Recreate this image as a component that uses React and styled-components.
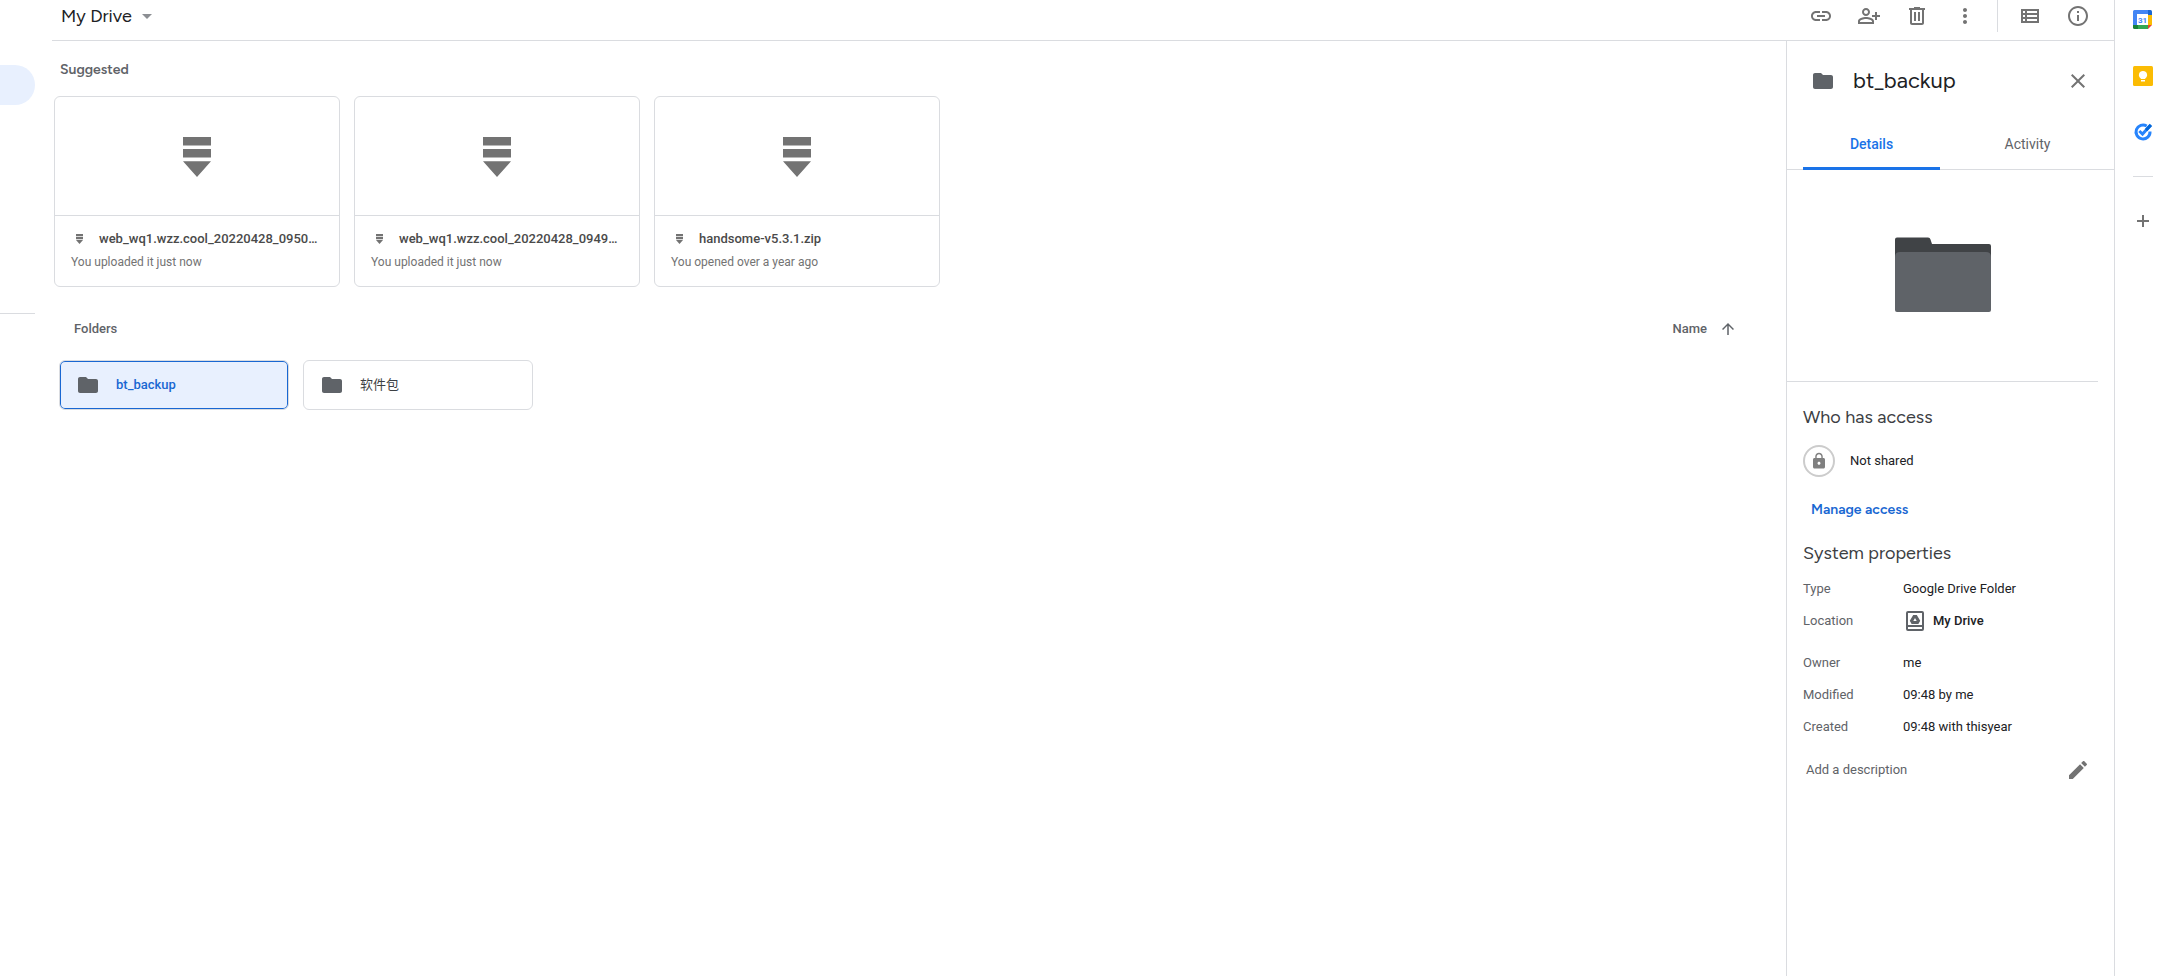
import React, { useState } from 'react'
import styled, { createGlobalStyle, css } from 'styled-components'

const GlobalStyle = createGlobalStyle`
  * {
    box-sizing: border-box;
  }
  body {
    margin: 0;
    background: #fff;
    color: #202124;
    font-family: Roboto, 'Noto Sans CJK SC', sans-serif;
    font-size: 13px;
    line-height: 20px;
  }
  button {
    padding: 0;
    border: 0;
    background: none;
    color: inherit;
    font: inherit;
    cursor: pointer;
  }
  h1, h2, h3, p, dl, dd {
    margin: 0;
  }
  svg {
    display: block;
    flex: none;
  }
`

const display = css`
  font-family: Figtree, Outfit, Lato, sans-serif;
`

const Page = styled.div`
  display: flex;
  min-height: 100vh;
`

const Sidebar = styled.nav`
  width: 52px;
  padding: 65px 17px 0 0;
  flex: none;
`

const ActiveItem = styled.div`
  height: 40px;
  border-radius: 0 20px 20px 0;
  background: #e8f0fe;
`

const SidebarLine = styled.hr`
  height: 1px;
  margin: 208px 0 0;
  border: 0;
  background: #dadce0;
`

const Workspace = styled.div`
  flex: 1;
  min-width: 0;
  display: flex;
  flex-direction: column;
`

const Toolbar = styled.header`
  height: 41px;
  padding: 0 24px 8px 9px;
  display: flex;
  align-items: center;
  justify-content: space-between;
  border-bottom: 1px solid #dadce0;
`

const Crumb = styled.button`
  ${display}
  display: flex;
  align-items: center;
  gap: 10px;
  font-size: 18px;
  line-height: 24px;
`

const Actions = styled.div`
  display: flex;
  align-items: center;
  gap: 24px;
`

const IconButton = styled.button`
  display: flex;
  align-items: center;
  justify-content: center;
  width: 24px;
  height: 24px;
  color: #737373;
`

const Separator = styled.span`
  width: 1px;
  height: 32px;
  margin: 0 -4px;
  background: #dadce0;
`

const Body = styled.div`
  flex: 1;
  display: flex;
`

const Files = styled.main`
  flex: 1;
  min-width: 0;
  padding: 19px 49px 0 2px;
`

const SuggestedTitle = styled.h2`
  ${display}
  padding-left: 6px;
  color: #5f6368;
  font-size: 14px;
  font-weight: 600;
  line-height: 20px;
`

const Cards = styled.div`
  display: flex;
  gap: 14px;
  margin-top: 16px;
`

const Card = styled.article`
  width: 286px;
  height: 191px;
  border: 1px solid #dadce0;
  border-radius: 6px;
`

const Preview = styled.div`
  height: 119px;
  padding-top: 2px;
  display: flex;
  align-items: center;
  justify-content: center;
  border-bottom: 1px solid #dadce0;
  color: #737373;
`

const CardInfo = styled.div`
  padding: 13px 20px 0 16px;
  color: #737373;
  font-size: 12px;
`

const FileName = styled.h3`
  display: flex;
  align-items: center;
  gap: 16px;
  padding-left: 5px;
  margin-bottom: 3px;
  font-size: 13px;
  font-weight: 500;
  line-height: 20px;
  white-space: nowrap;
  span {
    color: #4a4a4a;
  }
`

const FoldersHead = styled.div`
  display: flex;
  justify-content: space-between;
  align-items: center;
  margin-top: 32px;
  padding-left: 20px;
  color: #5f6368;
  h2 {
    font-size: 13px;
    font-weight: 500;
  }
`

const SortButton = styled.button`
  display: flex;
  align-items: center;
  gap: 12px;
  font-weight: 500;
`

const FolderList = styled.div`
  display: flex;
  gap: 14px;
  margin-top: 21px;
  padding-left: 5px;
`

const FolderTile = styled.button`
  display: flex;
  align-items: center;
  gap: 16px;
  width: 230px;
  height: 50px;
  padding-left: 16px;
  border: 1px solid #dadce0;
  border-radius: 6px;
  background: #fff;
  color: #3c4043;
  ${p => p.$selected && css`
    background: #e8f0fe;
    box-shadow: inset 0 0 0 1px #1967d2;
    color: #1967d2;
    font-weight: 500;
  `}
  svg {
    color: #5f6368;
  }
`

const Panel = styled.aside`
  width: 328px;
  flex: none;
  border-left: 1px solid #dadce0;
`

const PanelHead = styled.div`
  display: flex;
  align-items: center;
  height: 80px;
  padding: 0 24px;
  color: #5f6368;
  h1 {
    ${display}
    flex: 1;
    margin-left: 18px;
    color: #202124;
    font-size: 22px;
    font-weight: 400;
    line-height: 28px;
  }
`

const Tabs = styled.div`
  display: flex;
  gap: 19px;
  height: 49px;
  padding: 0 18px 0 16px;
  border-bottom: 1px solid #dadce0;
`

const Tab = styled.button`
  flex: 1;
  height: 49px;
  padding-bottom: 1px;
  border-bottom: 3px solid ${p => p.$active ? '#1a73e8' : 'transparent'};
  color: ${p => p.$active ? '#1a73e8' : '#5f6368'};
  font-size: 14px;
  font-weight: ${p => p.$active ? 500 : 400};
`

const Hero = styled.div`
  display: flex;
  justify-content: center;
  height: 212px;
  margin-right: 16px;
  padding-top: 67px;
  border-bottom: 1px solid #dadce0;
`

const Section = styled.section`
  padding: 23px 24px 0 16px;
`

const SectionTitle = styled.h2`
  ${display}
  color: #3c4043;
  font-size: 18px;
  font-weight: 400;
  line-height: 24px;
`

const Access = styled.div`
  display: flex;
  align-items: center;
  gap: 15px;
  margin-top: 16px;
`

const LockBadge = styled.span`
  display: flex;
  align-items: center;
  justify-content: center;
  width: 32px;
  height: 32px;
  border: 2px solid #ccc;
  border-radius: 50%;
  color: #808080;
`

const ManageButton = styled.button`
  ${display}
  display: block;
  margin: 25px 0 0 8px;
  color: #1967d2;
  font-size: 14px;
  font-weight: 600;
  line-height: 16px;
`

const Properties = styled.dl`
  display: grid;
  grid-template-columns: 100px 1fr;
  row-gap: 12px;
  margin-top: 14px;
  dt {
    color: #5f6368;
  }
`

const Location = styled.dd`
  && {
    margin-bottom: 10px;
  }
  display: flex;
  align-items: center;
  gap: 6px;
  height: 20px;
  font-weight: 500;
`

const Description = styled.div`
  display: flex;
  align-items: center;
  justify-content: space-between;
  height: 24px;
  margin-top: 21px;
  padding-left: 3px;
  color: #5f6368;
`

const Rail = styled.aside`
  width: 43px;
  flex: none;
  display: flex;
  flex-direction: column;
  padding: 8px 0 0 16px;
  gap: 32px;
  border-left: 1px solid #dadce0;
`

const RailLine = styled.hr`
  width: 20px;
  height: 1px;
  margin: 0 0 0 2px;
  border: 0;
  background: #dadce0;
`

const Icon = ({ d, size = 24 }) => (
  <svg width={size} height={size} viewBox="0 0 24 24" fill="currentColor" aria-hidden="true">
    <path d={d} />
  </svg>
)

const paths = {
  folder: 'M10 4H4c-1.1 0-2 .9-2 2v12c0 1.1.9 2 2 2h16c1.1 0 2-.9 2-2V8c0-1.1-.9-2-2-2h-8l-2-2z',
  link: 'M3.9 12c0-1.71 1.39-3.1 3.1-3.1h4V7H7c-2.76 0-5 2.24-5 5s2.24 5 5 5h4v-1.9H7c-1.71 0-3.1-1.39-3.1-3.1zM8 13h8v-2H8v2zm9-6h-4v1.9h4c1.71 0 3.1 1.39 3.1 3.1s-1.39 3.1-3.1 3.1h-4V17h4c2.76 0 5-2.24 5-5s-2.24-5-5-5z',
  share: 'M9 12c2.21 0 4-1.79 4-4s-1.79-4-4-4-4 1.79-4 4 1.79 4 4 4zm0-6c1.1 0 2 .9 2 2s-.9 2-2 2-2-.9-2-2 .9-2 2-2zm0 7c-2.67 0-8 1.34-8 4v3h16v-3c0-2.66-5.33-4-8-4zm6 5H3v-.99C3.2 16.29 6.3 15 9 15s5.8 1.29 6 2v1zm5-7V8h-2v3h-3v2h3v3h2v-3h3v-2h-3z',
  trash: 'M15 4V3H9v1H4v2h1v13c0 1.1.9 2 2 2h10c1.1 0 2-.9 2-2V6h1V4h-5zm2 15H7V6h10v13zM9 8h2v9H9zm4 0h2v9h-2z',
  more: 'M12 8c1.1 0 2-.9 2-2s-.9-2-2-2-2 .9-2 2 .9 2 2 2zm0 2c-1.1 0-2 .9-2 2s.9 2 2 2 2-.9 2-2-.9-2-2-2zm0 6c-1.1 0-2 .9-2 2s.9 2 2 2 2-.9 2-2-.9-2-2-2z',
  list: 'M3 5v14h18V5H3zm4 2v2H5V7h2zm-2 6v-2h2v2H5zm0 2h2v2H5v-2zm14 2H9v-2h10v2zm0-4H9v-2h10v2zm0-4H9V7h10v2z',
  info: 'M11 7h2v2h-2zm0 4h2v6h-2zm1-9C6.48 2 2 6.48 2 12s4.48 10 10 10 10-4.48 10-10S17.52 2 12 2zm0 18c-4.41 0-8-3.59-8-8s3.59-8 8-8 8 3.59 8 8-3.59 8-8 8z',
  close: 'M19 6.41L17.59 5 12 10.59 6.41 5 5 6.41 10.59 12 5 17.59 6.41 19 12 13.41 17.59 19 19 17.59 13.41 12z',
  up: 'M4 12l1.41 1.41L11 7.83V20h2V7.83l5.58 5.59L20 12l-8-8-8 8z',
  lock: 'M18 8h-1V6c0-2.76-2.24-5-5-5S7 3.24 7 6v2H6c-1.1 0-2 .9-2 2v10c0 1.1.9 2 2 2h12c1.1 0 2-.9 2-2V10c0-1.1-.9-2-2-2zm-6 9c-1.1 0-2-.9-2-2s.9-2 2-2 2 .9 2 2-.9 2-2 2zm3.1-9H8.9V6c0-1.71 1.39-3.1 3.1-3.1s3.1 1.39 3.1 3.1v2z',
  edit: 'M3 17.25V21h3.75L17.81 9.94l-3.75-3.75L3 17.25zM20.71 7.04c.39-.39.39-1.02 0-1.41l-2.34-2.34c-.39-.39-1.02-.39-1.41 0l-1.83 1.83 3.75 3.75 1.83-1.83z',
  add: 'M18 13h-5v5h-2v-5H6v-2h5V6h2v5h5v2z',
}

const ArchiveIcon = ({ width, height }) => (
  <svg width={width} height={height} viewBox="0 0 28 40" fill="currentColor" aria-hidden="true">
    <path d="M0 0h28v8.500H0zM0 12h28v8.500H0zM0 24.300h28L14 40z" />
  </svg>
)

const BigFolder = () => (
  <svg width="96" height="75" viewBox="0 0 96 75" aria-hidden="true">
    <path d="M2 .5h31q2 0 2.500 2L37 7h57q2 0 2 2v30H0V2.500q0-2 2-2z" fill="#404346" />
    <path d="M5 15h86q5 0 5 5v53q0 2-2 2H2q-2 0-2-2V20q0-5 5-5z" fill="#5f6368" />
  </svg>
)

const DriveIcon = () => (
  <svg width="24" height="24" viewBox="0 0 24 24" aria-hidden="true">
    <path d="M5 2h14q2 0 2 2v16q0 2-2 2H5q-2 0-2-2V4q0-2 2-2zm0 2v12h14V4zm0 14v2h14v-2z" fill="#5f6368" fillRule="evenodd" />
    <path d="M10.200 6h3.600l3.400 5.800L15.400 15H8.600l-1.800-3.200zM12 9l-1.700 3h3.400z" fill="#5f6368" fillRule="evenodd" />
  </svg>
)

const CalendarIcon = () => (
  <svg width="20" height="20" viewBox="0 0 20 20" aria-hidden="true">
    <path d="M1.500 0H15v5H5v10H0V1.500Q0 0 1.500 0z" fill="#4285f4" />
    <path d="M15 0h2.500Q19 0 19 1.500V5h-4z" fill="#1967d2" />
    <path d="M15 5h4v10h-4z" fill="#fbbc04" />
    <path d="M5 15h10v4H5z" fill="#34a853" />
    <path d="M0 15h5v4H1.500Q0 19 0 17.500z" fill="#188038" />
    <path d="M15 15h4l-4 4z" fill="#ea4335" />
    <path d="M4 4h11v11H4z" fill="#fff" />
    <text x="9.500" y="13" textAnchor="middle" fontFamily="Roboto, sans-serif" fontSize="8" fontWeight="700" fill="#4285f4">31</text>
  </svg>
)

const KeepIcon = () => (
  <svg width="20" height="20" viewBox="0 0 20 20" aria-hidden="true">
    <rect width="20" height="20" rx="1.500" fill="#fbbc04" />
    <path d="M10 5a4 4 0 0 0-2.200 7.400V13h4.400v-.6A4 4 0 0 0 10 5zM8 14h4v1.500H8z" fill="#fff" />
  </svg>
)

const TasksIcon = () => (
  <svg width="20" height="20" viewBox="0 0 20 20" fill="none" aria-hidden="true">
    <path d="M13.700 4A7 7 0 1 0 17 9.500" stroke="#2684fc" strokeWidth="3" />
    <path d="M6.300 9l3.200 3 8-8.700" stroke="#2684fc" strokeWidth="3" />
    <path d="M13 8.200l5-5.300" stroke="#0066da" strokeWidth="3.200" />
  </svg>
)

const files = [
  { name: 'web_wq1.wzz.cool_20220428_0950…', note: 'You uploaded it just now' },
  { name: 'web_wq1.wzz.cool_20220428_0949…', note: 'You uploaded it just now' },
  { name: 'handsome-v5.3.1.zip', note: 'You opened over a year ago' },
]

const folders = ['bt_backup', '软件包']

export default function App() {
  const [selected, setSelected] = useState('bt_backup')
  const [tab, setTab] = useState('Details')

  return (
    <>
      <GlobalStyle />
      <Page>
        <Sidebar>
          <ActiveItem />
          <SidebarLine />
        </Sidebar>
        <Workspace>
          <Toolbar>
            <Crumb>
              My Drive
              <svg width="10" height="5" viewBox="0 0 10 5" fill="#8c8f93"><path d="M0 0h10L5 5z" /></svg>
            </Crumb>
            <Actions>
              <IconButton aria-label="Get link"><Icon d={paths.link} /></IconButton>
              <IconButton aria-label="Share"><Icon d={paths.share} /></IconButton>
              <IconButton aria-label="Remove"><Icon d={paths.trash} /></IconButton>
              <IconButton aria-label="More actions"><Icon d={paths.more} /></IconButton>
              <Separator />
              <IconButton aria-label="List layout"><Icon d={paths.list} /></IconButton>
              <IconButton aria-label="View details"><Icon d={paths.info} /></IconButton>
            </Actions>
          </Toolbar>
          <Body>
            <Files>
              <SuggestedTitle>Suggested</SuggestedTitle>
              <Cards>
                {files.map(file => (
                  <Card key={file.name}>
                    <Preview><ArchiveIcon width={28} height={40} /></Preview>
                    <CardInfo>
                      <FileName>
                        <ArchiveIcon width={7} height={10} />
                        <span>{file.name}</span>
                      </FileName>
                      <p>{file.note}</p>
                    </CardInfo>
                  </Card>
                ))}
              </Cards>
              <FoldersHead>
                <h2>Folders</h2>
                <SortButton>Name <Icon d={paths.up} size={18} /></SortButton>
              </FoldersHead>
              <FolderList>
                {folders.map(name => (
                  <FolderTile key={name} $selected={name === selected} onClick={() => setSelected(name)}>
                    <Icon d={paths.folder} />
                    {name}
                  </FolderTile>
                ))}
              </FolderList>
            </Files>
            <Panel>
              <PanelHead>
                <Icon d={paths.folder} />
                <h1>bt_backup</h1>
                <IconButton aria-label="Close"><Icon d={paths.close} /></IconButton>
              </PanelHead>
              <Tabs role="tablist">
                {['Details', 'Activity'].map(name => (
                  <Tab key={name} role="tab" aria-selected={tab === name} $active={tab === name} onClick={() => setTab(name)}>
                    {name}
                  </Tab>
                ))}
              </Tabs>
              <Hero><BigFolder /></Hero>
              <Section>
                <SectionTitle>Who has access</SectionTitle>
                <Access>
                  <LockBadge><Icon d={paths.lock} size={18} /></LockBadge>
                  Not shared
                </Access>
                <ManageButton>Manage access</ManageButton>
              </Section>
              <Section>
                <SectionTitle>System properties</SectionTitle>
                <Properties>
                  <dt>Type</dt>
                  <dd>Google Drive Folder</dd>
                  <dt>Location</dt>
                  <Location><DriveIcon /> My Drive</Location>
                  <dt>Owner</dt>
                  <dd>me</dd>
                  <dt>Modified</dt>
                  <dd>09:48 by me</dd>
                  <dt>Created</dt>
                  <dd>09:48 with thisyear</dd>
                </Properties>
                <Description>
                  Add a description
                  <IconButton aria-label="Edit description"><Icon d={paths.edit} /></IconButton>
                </Description>
              </Section>
            </Panel>
          </Body>
        </Workspace>
        <Rail>
          <IconButton aria-label="Calendar"><CalendarIcon /></IconButton>
          <IconButton aria-label="Keep"><KeepIcon /></IconButton>
          <IconButton aria-label="Tasks"><TasksIcon /></IconButton>
          <RailLine />
          <IconButton aria-label="Get add-ons"><Icon d={paths.add} /></IconButton>
        </Rail>
      </Page>
    </>
  )
}
